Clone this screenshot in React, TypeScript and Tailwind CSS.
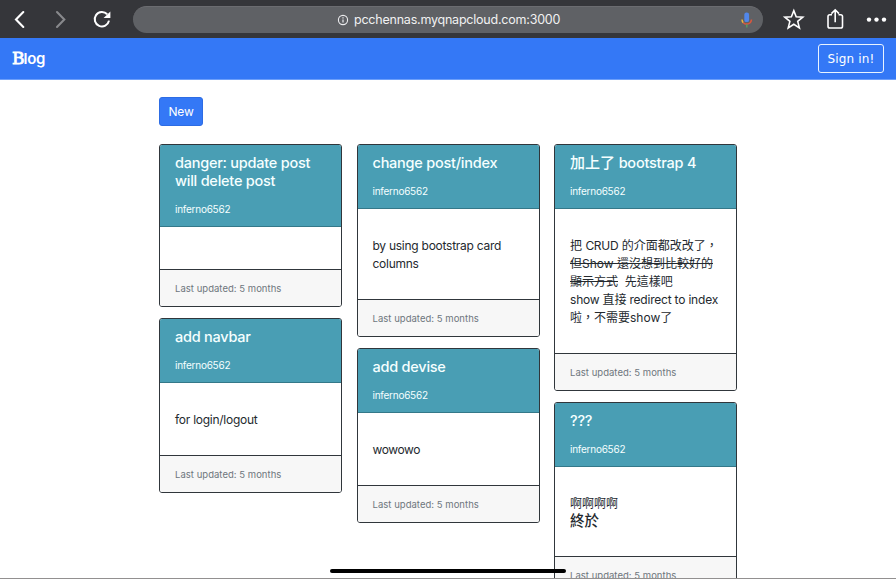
import type { ReactNode } from "react";

function Toolbar() {
  return (
    <div className="flex h-[38px] items-center bg-[#35363a] text-white">
      <svg className="h-[38px] w-[133px] shrink-0" viewBox="0 0 133 38" fill="none">
        <path d="M23.3 12 L16 19.5 L23.3 27" stroke="#fff" strokeWidth="2.1" strokeLinecap="round" />
        <path d="M57 12 L64.3 19.5 L57 27" stroke="#88898c" strokeWidth="2.1" strokeLinecap="round" />
        <path d="M107.2 14.3 A7.2 7.2 0 1 0 109 20.6" stroke="#fff" strokeWidth="2" />
        <path d="M110.4 11.5 V18 H103.6 Z" fill="#fff" />
      </svg>
      <div className="mt-px flex h-[27px] w-[630px] shrink-0 items-center rounded-full border-t border-[#6b6c70] bg-[#5f6165]">
        <svg className="ml-[204px] h-[12px] w-[12px] shrink-0" viewBox="0 0 12 12" fill="none" stroke="#ececee">
          <circle cx="6" cy="6" r="4.6" strokeWidth="1.1" />
          <path d="M6 5.4 V8.6 M6 3.3 V4.4" strokeWidth="1.2" />
        </svg>
        <span className="ml-[5px] w-[207px] whitespace-nowrap text-[12.5px] leading-[18px] tracking-[-0.22px] text-[#f1f1f2]">
          pcchennas.myqnapcloud.com:3000
        </span>
        <svg className="ml-[179px] h-[18px] w-[14px] shrink-0" viewBox="0 0 14 18" fill="none">
          <rect x="4.3" y="1.5" width="4.8" height="9.6" rx="2.2" fill="#5187ea" />
          <path d="M2 8.5 Q2.1 10.6 3.3 11.7" stroke="#efb63c" strokeWidth="1.5" />
          <path d="M3.3 11.7 C5.8 14.2 11.2 13.4 11.5 8.5" stroke="#d9573e" strokeWidth="1.5" />
          <path d="M6.8 13.2 V16.5" stroke="#579b62" strokeWidth="1.5" />
        </svg>
      </div>
      <svg className="h-[38px] w-[133px] shrink-0" viewBox="763 0 133 38" fill="none">
        <path d="M793.8 10.6 L796.2 16.7 L802.8 17.1 L797.7 21.4 L799.4 27.9 L793.8 24.3 L788.2 27.9 L789.9 21.4 L784.8 17.1 L791.4 16.7 Z" stroke="#fff" strokeWidth="1.6" />
        <path d="M832 14.7 H829.8 Q828 14.7 828 16.5 V26.2 Q828 28 829.8 28 H840.7 Q842.5 28 842.5 26.2 V16.5 Q842.5 14.7 840.7 14.7 H838.5 M835.2 22.3 V10.5 M831.4 13.6 L835.2 9.8 L839 13.6" stroke="#fff" strokeWidth="1.6" />
        <circle cx="869" cy="19.6" r="2.2" fill="#fff" />
        <circle cx="876.5" cy="19.6" r="2.2" fill="#fff" />
        <circle cx="884" cy="19.6" r="2.2" fill="#fff" />
      </svg>
    </div>
  );
}

function Card({ title, children, bodyClass }: { title: ReactNode; children?: ReactNode; bodyClass: string }) {
  return (
    <article className="flex flex-col overflow-hidden rounded-[3px] border border-[#30363b] bg-white">
      <header className="border-b border-[#347889] bg-[#499eb4] px-[15px] pt-[9px] pb-[8px] text-[#f5ffff]">
        <h2 className="whitespace-nowrap text-[14.5px] leading-[18px] font-medium tracking-[-0.24px]">{title}</h2>
        <p className="mt-[11px] text-[10px] leading-[17px] tracking-[-0.25px]">inferno6562</p>
      </header>
      <div className={`px-[15px] text-[12px] leading-[18px] whitespace-nowrap text-[#24292e] ${bodyClass}`}>{children}</div>
      <footer className="h-[37px] border-t border-[#30363b] bg-[#f7f7f7] px-[15px] pt-[10px] text-[9.5px] leading-[18px] tracking-[0.03px] whitespace-nowrap text-[#6e767d]">
        Last updated: 5 months
      </footer>
    </article>
  );
}

export default function App() {
  return (
    <div className="relative h-[579px] w-[896px] overflow-hidden bg-white font-['Inter','Noto_Sans_CJK_TC',sans-serif]">
      <Toolbar />
      <nav className="flex h-[42px] items-center justify-between border-b border-[#6d9ffa] bg-[#3478f6] px-[12px] text-white">
        <a className="flex items-baseline text-[15px] leading-[22px] font-semibold tracking-[-0.3px]">
          <span className="w-[11.5px] font-['DejaVu_Serif',serif] text-[17px] font-normal tracking-[-1px] [-webkit-text-stroke:0.8px_white]">B</span>
          <span>log</span>
        </a>
        <button className="h-[29px] w-[66px] rounded-[3px] border border-[#e8f3ff] font-['DejaVu_Sans',sans-serif] text-[12px] tracking-[0.15px]">
          Sign in!
        </button>
      </nav>
      <main className="mx-auto flex w-[578px] flex-col pt-[17px]">
        <button className="h-[29px] w-[44px] rounded-[3px] border border-[#2d6ce4] bg-[#3478f6] pt-px text-[12px] tracking-[-0.2px] text-white">New</button>
        <div className="mt-[18px] grid grid-cols-[183px_183px_183px] items-start gap-x-[14.5px]">
          <div className="flex flex-col gap-[11px]">
            <Card title={<>danger: update post<br />will delete post</>} bodyClass="h-[42px]" />
            <Card title="add navbar" bodyClass="h-[72px] pt-[28px] tracking-[-0.26px]">for login/logout</Card>
          </div>
          <div className="flex flex-col gap-[11px]">
            <Card title="change post/index" bodyClass="h-[90px] pt-[28px] tracking-[-0.26px]">by using bootstrap card<br />columns</Card>
            <Card title="add devise" bodyClass="h-[72px] pt-[28px] tracking-[-0.4px]">wowowo</Card>
          </div>
          <div className="flex flex-col gap-[11px]">
            <Card title={<><span className="text-[15px] tracking-[0px]">加上了</span> bootstrap 4</>} bodyClass="h-[144px] pt-[28px]">
              把 <span className="tracking-[-0.3px]">CRUD</span> 的介面都改改了，<br />
              <s>但Show 還沒想到比較好的</s><br />
              <s>顯示方式</s>&nbsp; 先這樣吧<br />
              <span className="tracking-[-0.2px]">show 直接 redirect to index</span><br />
              啦，不需要show了
            </Card>
            <Card title="???" bodyClass="h-[89px] pt-[28px]">
              啊啊啊啊<br />
              <span className="text-[14.5px] leading-[16px] font-medium">終於</span>
            </Card>
          </div>
        </div>
      </main>
      <div className="absolute top-[569px] left-[330px] h-[4px] w-[236px] rounded-full bg-black" />
      <div className="absolute bottom-0 left-0 h-px w-full bg-[#929090]" />
    </div>
  );
}
